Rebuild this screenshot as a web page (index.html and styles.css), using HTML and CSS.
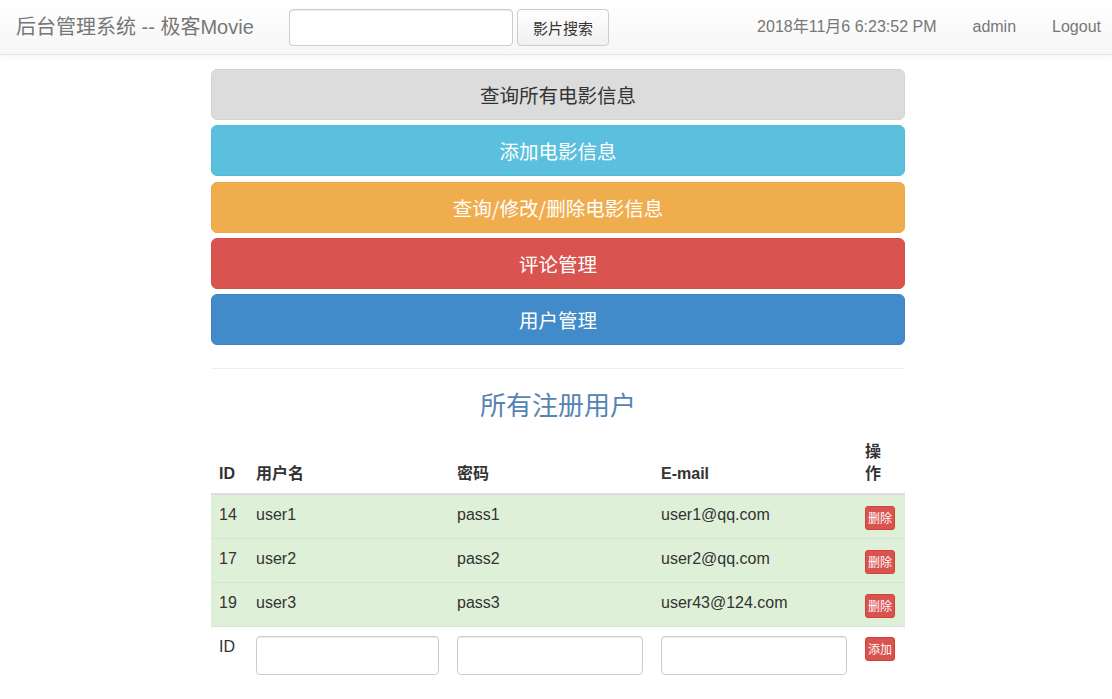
FILE: index.html
```html
<!DOCTYPE html>
<html lang="zh-CN">
<head>
<meta charset="utf-8">
<title>后台管理系统 -- 极客Movie</title>
<link rel="stylesheet" href="styles.css">
</head>
<body>
<nav class="navbar">
  <div class="brand">后台管理系统 -- 极客Movie</div>
  <form class="search">
    <input class="search-input" type="text">
    <button class="search-btn" type="button">影片搜索</button>
  </form>
  <ul class="nav-right">
    <li>2018年11月6 6:23:52 PM</li>
    <li>admin</li>
    <li>Logout</li>
  </ul>
</nav>

<main class="main">
  <div class="menu">
    <a class="big-btn btn-gray">查询所有电影信息</a>
    <a class="big-btn btn-info">添加电影信息</a>
    <a class="big-btn btn-warning">查询/修改/删除电影信息</a>
    <a class="big-btn btn-danger">评论管理</a>
    <a class="big-btn btn-primary">用户管理</a>
  </div>
  <hr class="divider">
  <h2 class="title">所有注册用户</h2>
  <table class="users">
    <colgroup>
      <col class="c-id"><col class="c-name"><col class="c-pass"><col class="c-mail"><col class="c-op">
    </colgroup>
    <thead>
      <tr><th>ID</th><th>用户名</th><th>密码</th><th>E-mail</th><th class="th-op">操作</th></tr>
    </thead>
    <tbody>
      <tr class="ok"><td>14</td><td>user1</td><td>pass1</td><td>user1@qq.com</td><td><button class="xs-btn">删除</button></td></tr>
      <tr class="ok"><td>17</td><td>user2</td><td>pass2</td><td>user2@qq.com</td><td><button class="xs-btn">删除</button></td></tr>
      <tr class="ok"><td>19</td><td>user3</td><td>pass3</td><td>user43@124.com</td><td><button class="xs-btn">删除</button></td></tr>
      <tr class="add-row"><td>ID</td><td><input class="field" type="text"></td><td><input class="field" type="text"></td><td><input class="field" type="text"></td><td><button class="xs-btn">添加</button></td></tr>
    </tbody>
  </table>
</main>
</body>
</html>
```

FILE: styles.css
```css
* { box-sizing: border-box; }
html, body { margin: 0; padding: 0; }
body {
  font-family: "Liberation Sans", Arial, "Noto Sans CJK SC", sans-serif;
  font-size: 16px;
  color: #333;
  background: #fff;
}

.navbar {
  height: 55px;
  display: flex;
  align-items: center;
  background: linear-gradient(to bottom, #ffffff 0%, #f6f6f6 100%);
  border-bottom: 1px solid #e4e4e4;
  box-shadow: 0 1px 6px rgba(0,0,0,0.06);
}
.brand {
  width: 289px;
  padding-left: 16px;
  font-size: 20px;
  line-height: 24px;
  color: #777;
  white-space: nowrap;
}
.search { display: flex; align-items: center; margin: 0; }
.search-input {
  width: 224px;
  height: 37px;
  border: 1px solid #ccc;
  border-radius: 4px;
  box-shadow: inset 0 1px 1px rgba(0,0,0,0.075);
  background: #fff;
}
.search-btn {
  margin-left: 4px;
  width: 92px;
  height: 37px;
  border: 1px solid #ccc;
  border-radius: 4px;
  background: linear-gradient(to bottom, #fff 0%, #f0f0f0 100%);
  font-family: "Noto Sans CJK SC", sans-serif;
  font-size: 15px;
  color: #333;
}
.nav-right {
  list-style: none;
  margin: 0 0 0 auto;
  padding: 0 11px 0 0;
  display: flex;
  align-items: center;
  gap: 36px;
  font-size: 16px;
  line-height: 20px;
  color: #777;
}
.nav-right li { white-space: nowrap; }

.main {
  width: 694px;
  margin-left: calc(50% - 345px);
  padding-top: 14px;
}
.menu { display: flex; flex-direction: column; gap: 5.25px; }
.big-btn {
  display: block;
  height: 51px;
  line-height: 49px;
  text-align: center;
  border: 1px solid transparent;
  border-radius: 6px;
  font-family: "Noto Sans CJK SC", sans-serif;
  font-size: 19.5px;
  color: #fff;
}
.btn-gray { background: #dcdcdc; border-color: #d4d4d4; color: #333; }
.btn-info { background: #5bc0de; border-color: #55b9d8; }
.btn-warning { background: #f0ad4e; border-color: #eca845; }
.btn-danger { background: #d9534f; border-color: #d4504c; }
.btn-primary { background: #428bca; border-color: #3c83c0; }

.divider {
  margin: 23px 0 0;
  border: 0;
  border-top: 1px solid #eee;
}
.title {
  margin: 20px 0 14px;
  text-align: center;
  font-family: "Noto Sans CJK SC", sans-serif;
  font-weight: 400;
  font-size: 26px;
  line-height: 30px;
  color: #5584b3;
}

.users {
  width: 694px;
  border-collapse: collapse;
  table-layout: fixed;
}
.c-id { width: 37px; }
.c-name { width: 201px; }
.c-pass { width: 204px; }
.c-mail { width: 204px; }
.c-op { width: 48px; }
.users th {
  text-align: left;
  vertical-align: bottom;
  padding: 8px;
  font-size: 16px;
  line-height: 22px;
  font-weight: bold;
  color: #333;
  border-bottom: 2px solid #ddd;
}
.users th.th-op { padding-right: 10px; }
.users td {
  padding: 8px;
  vertical-align: top;
  line-height: 24px;
  font-size: 16px;
  color: #333;
  border-top: 1px solid #ddd;
}
.users tbody tr:first-child td { border-top: 0; }
.users tr.ok td { background: #dff0d8; }
.add-row td:nth-child(2), .add-row td:nth-child(3), .add-row td:nth-child(4) { padding-right: 10px; }

.xs-btn {
  display: block;
  margin-top: 3px;
  width: 30px;
  height: 24px;
  padding: 0;
  border: 1px solid #d43f3a;
  border-radius: 3px;
  background: #d9534f;
  color: #fff;
  font-family: "Noto Sans CJK SC", sans-serif;
  font-size: 12px;
  line-height: 22px;
}
.add-row .xs-btn { margin-top: 2px; }
.field {
  display: block;
  margin-top: 1px;
  width: 100%;
  height: 39px;
  border: 1px solid #ccc;
  border-radius: 4px;
  box-shadow: inset 0 1px 1px rgba(0,0,0,0.075);
  background: #fff;
}
```
